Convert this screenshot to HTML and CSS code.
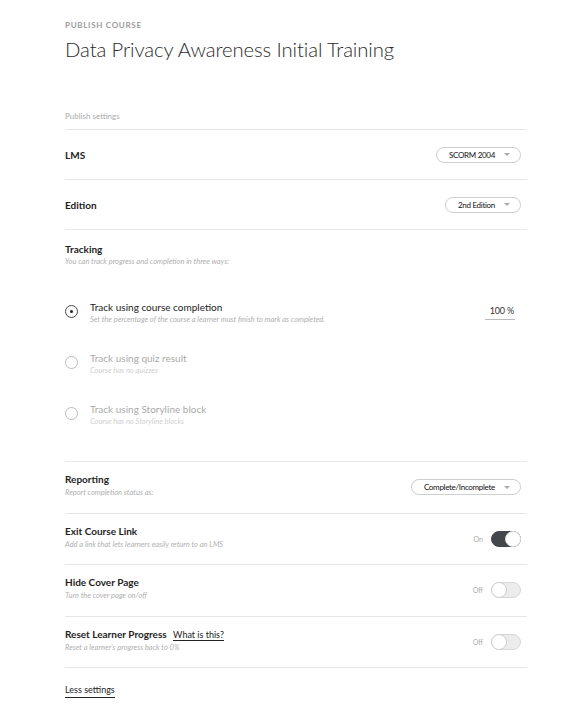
FILE: index.html
```html
<!DOCTYPE html>
<html>
<head>
<meta charset="utf-8">
<link rel="stylesheet" href="styles.css">
</head>
<body>
<div class="page">
  <header class="head">
    <div class="eyebrow">PUBLISH COURSE</div>
    <h1 class="title">Data Privacy Awareness Initial Training</h1>
  </header>

  <div class="section-caption">Publish settings</div>

  <div class="row simple">
    <div class="label">LMS</div>
    <div class="select">SCORM 2004<span class="caret"></span></div>
  </div>

  <div class="row simple">
    <div class="label">Edition</div>
    <div class="select">2nd Edition<span class="caret"></span></div>
  </div>

  <div class="tracking">
    <div class="label">Tracking</div>
    <div class="sub">You can track progress and completion in three ways:</div>
    <div class="options">
      <div class="option">
        <span class="radio checked"></span>
        <div class="opt-text">
          <div class="opt-label">Track using course completion</div>
          <div class="sub">Set the percentage of the course a learner must finish to mark as completed.</div>
        </div>
        <div class="percent">100 %</div>
      </div>
      <div class="option disabled">
        <span class="radio"></span>
        <div class="opt-text">
          <div class="opt-label">Track using quiz result</div>
          <div class="sub">Course has no quizzes</div>
        </div>
      </div>
      <div class="option disabled">
        <span class="radio"></span>
        <div class="opt-text">
          <div class="opt-label">Track using Storyline block</div>
          <div class="sub">Course has no Storyline blocks</div>
        </div>
      </div>
    </div>
  </div>

  <div class="row">
    <div class="text">
      <div class="label">Reporting</div>
      <div class="sub">Report completion status as:</div>
    </div>
    <div class="select">Complete/Incomplete<span class="caret"></span></div>
  </div>

  <div class="row">
    <div class="text">
      <div class="label">Exit Course Link</div>
      <div class="sub">Add a link that lets learners easily return to an LMS</div>
    </div>
    <div class="toggle-wrap"><span class="state">On</span><span class="toggle on"><span class="knob"></span></span></div>
  </div>

  <div class="row">
    <div class="text">
      <div class="label">Hide Cover Page</div>
      <div class="sub">Turn the cover page on/off</div>
    </div>
    <div class="toggle-wrap"><span class="state">Off</span><span class="toggle"><span class="knob"></span></span></div>
  </div>

  <div class="row">
    <div class="text">
      <div class="label">Reset Learner Progress <a class="link">What is this?</a></div>
      <div class="sub">Reset a learner's progress back to 0%</div>
    </div>
    <div class="toggle-wrap"><span class="state">Off</span><span class="toggle"><span class="knob"></span></span></div>
  </div>

  <div class="footer"><a class="less">Less settings</a></div>
</div>
</body>
</html>
```

FILE: styles.css
```css
* { box-sizing: border-box; }
html, body { margin: 0; padding: 0; background: #fff; }
body { font-family: Lato, "Open Sans", sans-serif; color: #222; }

.page { width: 462px; margin-left: 65px; }

.head { padding-top: 20px; }
.eyebrow { font-size: 8px; font-weight: 700; letter-spacing: 0.7px; color: #9a9a9a; line-height: 10px; }
.title { margin: 6px 0 0; font-size: 20.3px; font-weight: 300; color: #2b2b2b; line-height: 26px; letter-spacing: -0.1px; }

.section-caption { margin-top: 48px; font-size: 8px; color: #aaa; line-height: 12px; padding-bottom: 7px; border-bottom: 1px solid #e6e6e6; }

.row { display: flex; align-items: center; justify-content: space-between; border-bottom: 1px solid #e6e6e6; height: 51.5px; padding: 0 6px 3px 0; }
.row.simple { height: 50px; padding-bottom: 0; }
.row .text .sub { margin-top: 1px; }
.row .select, .row .toggle-wrap { margin-top: 3px; }

.label { font-size: 10px; font-weight: 700; color: #1e1e1e; line-height: 14px; }
.sub { font-size: 7.5px; font-style: italic; color: #b0b0b0; line-height: 12px; }

.select { display: flex; align-items: center; height: 16px; padding: 0 10px 0 12px; border: 1px solid #cfcfcf; border-radius: 8px; font-size: 8px; color: #111; letter-spacing: -0.3px; }
.row.simple .select { margin-top: 0; }
.caret { width: 0; height: 0; margin-left: 9px; border-left: 3.5px solid transparent; border-right: 3.5px solid transparent; border-top: 3px solid #aaa; }

.tracking { padding-top: 12px; border-bottom: 1px solid #e6e6e6; height: 232px; }
.options { margin-top: 32px; }
.option { display: flex; align-items: flex-start; height: 51px; padding-right: 12px; }
.opt-text { flex: 1; margin-left: 12px; }
.opt-label { font-size: 10px; color: #222; line-height: 14px; }
.option.disabled .opt-label { color: #aaa; }
.option.disabled .sub { color: #d0d0d0; }
.radio { width: 13px; height: 13px; border-radius: 50%; border: 1px solid #bbb; margin-top: 5px; display: flex; align-items: center; justify-content: center; flex: none; }
.radio.checked { border-color: #444; }
.radio.checked::after { content: ""; width: 3px; height: 3px; border-radius: 50%; background: #222; }
.percent { font-size: 9px; color: #333; margin-top: 5px; padding: 0 1px 3px 3px; border-bottom: 1px solid #bbb; width: 30px; text-align: right; letter-spacing: -0.2px; }

.text { display: flex; flex-direction: column; }
.link { display: inline-block; font-size: 9px; font-weight: 400; margin-left: 4px; color: #222; text-decoration: none; border-bottom: 1px solid #222; line-height: 11px; }

.toggle-wrap { display: flex; align-items: center; }
.state { font-size: 7px; color: #aaa; margin-right: 8px; }
.toggle { width: 30px; height: 16px; border-radius: 8px; background: #ececec; border: 1px solid #d8d8d8; position: relative; }
.toggle .knob { position: absolute; top: -1px; left: -1px; width: 16px; height: 16px; border-radius: 50%; background: #fff; border: 1px solid #cfcfcf; }
.toggle.on { background: #43474b; border-color: #43474b; }
.toggle.on .knob { left: auto; right: -1px; border-color: #e0e0e0; }

.footer { padding-top: 9px; }
.less { display: inline-block; font-size: 9px; color: #222; text-decoration: none; border-bottom: 1px solid #222; line-height: 12px; padding-bottom: 1px; }
```
